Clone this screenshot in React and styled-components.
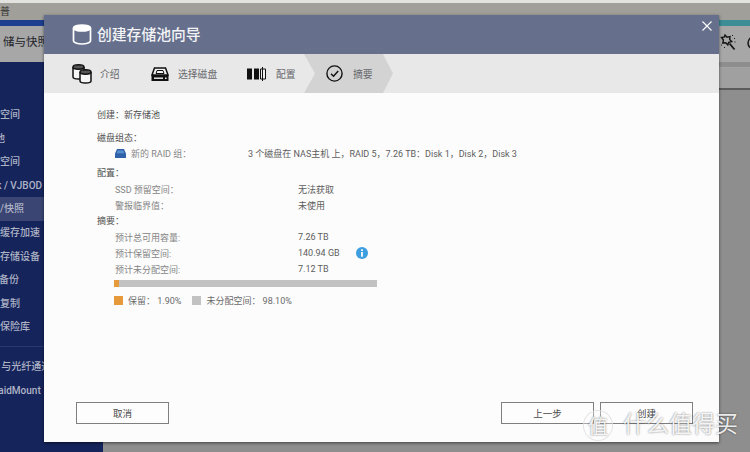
import React from 'react';
import styled, { createGlobalStyle } from 'styled-components';

const Global = createGlobalStyle`
  html, body { margin: 0; padding: 0; background: #8e8e8e; }
  * { box-sizing: border-box; }
`;

const FONT = `Roboto, "Noto Sans CJK SC", sans-serif`;

// Fenêtre de fond
const Page = styled.div`
  position: relative;
  width: 750px;
  height: 452px;
  overflow: hidden;
  display: flex;
  flex-direction: column;
  font-family: ${FONT};
  background: #8e8e8e;
`;

const TopStrip = styled.div`
  height: 3px;
  background: #e2e3df;
`;

const TitleBar = styled.div`
  height: 17px;
  background: #a09f9a;
  color: #33332f;
  font-size: 10px;
  line-height: 18px;
  overflow: hidden;
`;

const TitleText = styled.span`
  display: block;
  margin-left: 0;
`;

const Accent = styled.div`
  height: 6px;
  background: linear-gradient(90deg, #1d3f8f 0%, #1d3f8f 40%, #3c8d96 90%);
`;

const Toolbar = styled.div`
  height: 36px;
  background: #a7a7a7;
  display: flex;
  align-items: center;
  justify-content: space-between;
  overflow: hidden;
`;

const ToolbarTitle = styled.div`
  font-size: 11.5px;
  color: #22242a;
  margin-left: 3px;
  margin-top: -6px;
`;

const ToolIcons = styled.div`
  display: flex;
  align-items: center;
  gap: 11px;
  margin-right: -11px;
  margin-top: -3px;
`;

const Main = styled.div`
  flex: 1;
  display: flex;
  min-height: 0;
`;

const Sidebar = styled.div`
  width: 103px;
  background: #15245b;
  padding-top: 41px;
  overflow: hidden;
`;

const NavItem = styled.div`
  height: 23.6px;
  line-height: 23.6px;
  font-size: 10px;
  font-weight: 500;
  color: #aeb3c6;
  white-space: nowrap;
  background: ${p => (p.$active ? '#3a4573' : 'transparent')};
`;

const NavLabel = styled.span`
  display: inline-block;
  margin-left: ${p => p.$shift || 0}px;
`;

const NavGap = styled.div`
  height: 8px;
  margin-bottom: 8px;
  border-bottom: 1px solid #2a3870;
`;

const RightPane = styled.div`
  flex: 1;
  background: #8e8e8e;
`;

const PaneHead = styled.div`
  height: 23px;
  margin-top: 5px;
  border-top: 1px solid #a4a4a4;
  border-bottom: 2px solid #5b5b5b;
  background: #a0a0a0;
`;

// Diálogo
const Dialog = styled.div`
  position: absolute;
  left: 44px;
  top: 15px;
  width: 675px;
  height: 427px;
  background: #fcfcfc;
  box-shadow: 0 1px 3px rgba(0, 0, 0, 0.55);
  display: flex;
  flex-direction: column;
`;

const Header = styled.div`
  position: relative;
  height: 39px;
  flex: none;
  background: #666f8c;
  display: flex;
  align-items: center;
  gap: 5px;
  padding-left: 28px;
  color: #f3f4f7;
  font-size: 14.8px;
  font-weight: 500;
`;

const HeaderTitle = styled.div`
  margin-bottom: 3px;
`;

const Close = styled.div`
  position: absolute;
  right: 6px;
  top: 5px;
  width: 12px;
  height: 12px;
  display: flex;
`;

const Steps = styled.div`
  height: 39px;
  flex: none;
  background: #e8e8e8;
  display: flex;
  padding-left: 28px;
`;

const Step = styled.div`
  width: ${p => p.$width}px;
  display: flex;
  align-items: center;
  gap: ${p => p.$gap}px;
  font-size: 9.8px;
  color: #66676b;
  ${p =>
    p.$active &&
    `
    background: #d3d3d3;
    padding-left: 22px;
    clip-path: polygon(0 0, 79px 0, 89px 50%, 79px 100%, 0 100%, 11px 50%);
  `}
`;

const Body = styled.div`
  flex: 1;
  padding: 14px 26px 18px 53px;
  display: flex;
  flex-direction: column;
  font-size: 9px;
  color: #5a5a5a;
`;

const Heading = styled.div`
  height: 16px;
  line-height: 16px;
  margin-top: ${p => p.$top || 0}px;
  color: #4c4c4c;
`;

const Row = styled.div`
  display: flex;
  align-items: center;
  height: ${p => p.$height || 16}px;
  padding-left: 18px;
  color: #858585;
`;

const RowLabel = styled.div`
  width: ${p => p.$width}px;
  flex: none;
  display: flex;
  align-items: center;
  gap: 5px;
  color: inherit;
`;

const RowValue = styled.div`
  display: flex;
  align-items: center;
  color: #5d5d5d;
  white-space: nowrap;
`;

const InfoDot = styled.div`
  width: 12px;
  height: 12px;
  margin-left: 16px;
  display: flex;
`;

const Bar = styled.div`
  width: 263px;
  height: 7px;
  margin: 3px 0 0 17px;
  background: #c2c2c2;
  display: flex;
`;

const BarFill = styled.div`
  height: 100%;
  background: #e79a3c;
`;

const Legend = styled.div`
  display: flex;
  align-items: center;
  margin: 7px 0 0 17px;
  color: #6a6a6a;
`;

const Swatch = styled.span`
  width: 9px;
  height: 9px;
  background: ${p => p.$color};
  margin-right: 5px;
`;

const LegendText = styled.span`
  margin-right: 11px;
  white-space: nowrap;
`;

const Footer = styled.div`
  margin-top: auto;
  margin-left: -21px;
  display: flex;
  align-items: center;
`;

const Button = styled.button`
  width: 93px;
  height: 22px;
  padding: 0;
  margin-left: ${p => p.$left || 0}px;
  background: #fdfdfd;
  border: 1px solid #7f7f7f;
  border-radius: 0;
  font-family: ${FONT};
  font-size: 9.5px;
  color: #4a4a4a;
`;

const Spacer = styled.div`
  flex: 1;
`;

// Marca d'água
const Watermark = styled.div`
  position: absolute;
  left: 583px;
  top: 410px;
  display: flex;
  align-items: flex-start;
  color: rgba(255, 255, 255, 0.9);
  text-shadow: 0 0 2px rgba(0, 0, 0, 0.55);
`;

const Badge = styled.div`
  width: 30px;
  height: 31px;
  border-radius: 50%;
  border: 1.5px solid rgba(225, 225, 225, 0.85);
  background: rgba(255, 255, 255, 0.3);
  display: flex;
  align-items: center;
  justify-content: center;
  font-size: 20px;
`;

const MarkText = styled.div`
  margin-left: 10px;
  font-size: 23px;
  line-height: 30px;
  white-space: nowrap;
`;

const Cylinder = () => (
  <svg width="20" height="21" viewBox="0 0 20 21" fill="none" stroke="#fff" strokeWidth="1.7">
    <path d="M1.5 4v13c0 1.5 3.6 3 8.5 3s8.5-1.5 8.5-3V4" />
    <ellipse cx="10" cy="4" rx="8.5" ry="3" fill="#fff" />
  </svg>
);

const DbPair = () => (
  <svg width="20" height="20" viewBox="0 0 20 20" fill="#f6f6f6" stroke="#111" strokeWidth="1.5">
    <path d="M1 3v10c0 1 2.3 2 5.5 2s5.5-1 5.5-2V3" />
    <ellipse cx="6.5" cy="3" rx="5.5" ry="2.2" fill="#555" />
    <path d="M8 8v9c0 1 2.3 2 5.5 2s5.5-1 5.5-2V8" />
    <ellipse cx="13.5" cy="8" rx="5.5" ry="2.2" fill="#555" />
  </svg>
);

const DiskTray = () => (
  <svg width="18" height="14" viewBox="0 0 18 14" fill="none">
    <path d="M3.5 1h11l2.5 7H1z" stroke="#111" strokeWidth="1.5" fill="#f2f2f2" />
    <path d="M6 3.5h6l1 3H5z" stroke="#111" strokeWidth="1" />
    <path d="M.5 8h17v6H.5z" fill="#111" />
    <path d="M3 10.5h9v1.4H3z" fill="#f2f2f2" />
    <path d="M14 10.5h1.6v1.4H14z" fill="#f2f2f2" />
  </svg>
);

const RaidBars = () => (
  <svg width="19" height="14" viewBox="0 0 19 14">
    <path d="M0 1.5h5v11H0zM7 1.5h5v11H7z" fill="#111" />
    <path d="M13.5 2h5v10h-5z" fill="#f2f2f2" stroke="#111" />
    <path d="M15.5 0v14" stroke="#111" />
  </svg>
);

const CheckCircle = () => (
  <svg width="17" height="17" viewBox="0 0 17 17" fill="none" stroke="#111">
    <circle cx="8.5" cy="8.5" r="7.6" strokeWidth="1.4" />
    <path d="M5 8.8l2.5 2.4L12.2 6" strokeWidth="1.5" />
  </svg>
);

const HddBlue = () => (
  <svg width="11" height="9" viewBox="0 0 11 9">
    <path d="M2 0h7l2 4.5V9H0V4.5z" fill="#2f62a8" />
    <path d="M2.7 1.5h5.6l1 2.7H1.7z" fill="#5b90cf" />
  </svg>
);

const Wand = () => (
  <svg width="16" height="17" viewBox="0 0 16 17" fill="none" stroke="#151515">
    <path d="M5 1l2 2.2 3-.6-.3 3 2 2-3 .7-.9 2.7-2-2.2-3 .2.6-3L1.5 3.5l3-.5z" strokeWidth="1.4" />
    <path d="M9.5 9.5l5 6" strokeWidth="1.8" />
    <path d="M12 1.5h1M14 4.5h1M14.5 8h1M1 11h1M4 13.5h1" strokeDasharray="1 1" />
  </svg>
);

const Ring = () => (
  <svg width="14" height="16" viewBox="0 0 14 16" fill="none" stroke="#151515" strokeWidth="1.5">
    <circle cx="7" cy="8" r="6" />
  </svg>
);

const navItems = [
  { label: '存储空间', shift: -20 },
  { label: '池', shift: -5 },
  { label: '空间', shift: 0 },
  { label: 'Disk / VJBOD', shift: -18 },
  { label: '组/快照', shift: -10, active: true },
  { label: '缓存加速', shift: 0 },
  { label: '存储设备', shift: 0 },
  { label: '备份', shift: -1 },
  { label: '复制', shift: 0 },
  { label: '保险库', shift: 0 },
];

const App = () => {
  return (
    <Page>
      <Global />
      <TopStrip />
      <TitleBar>
        <TitleText>普</TitleText>
      </TitleBar>
      <Accent />
      <Toolbar>
        <ToolbarTitle>储与快照</ToolbarTitle>
        <ToolIcons>
          <Wand />
          <Ring />
        </ToolIcons>
      </Toolbar>
      <Main>
        <Sidebar>
          {navItems.map(item => (
            <NavItem key={item.label} $active={item.active}>
              <NavLabel $shift={item.shift}>{item.label}</NavLabel>
            </NavItem>
          ))}
          <NavGap />
          <NavItem>
            <NavLabel $shift={-4}>I 与光纤通道</NavLabel>
          </NavItem>
          <NavItem>
            <NavLabel $shift={-8}>RaidMount</NavLabel>
          </NavItem>
        </Sidebar>
        <RightPane>
          <PaneHead />
        </RightPane>
      </Main>

      <Dialog>
        <Header>
          <Cylinder />
          <HeaderTitle>创建存储池向导</HeaderTitle>
          <Close>
            <svg width="12" height="12" viewBox="0 0 12 12" stroke="#fff" strokeWidth="1.1">
              <path d="M1.5 1.5l9 9M10.5 1.5l-9 9" />
            </svg>
          </Close>
        </Header>
        <Steps>
          <Step $width={79} $gap={8}>
            <DbPair />
            介绍
          </Step>
          <Step $width={96} $gap={9}>
            <DiskTray />
            选择磁盘
          </Step>
          <Step $width={57} $gap={10}>
            <RaidBars />
            配置
          </Step>
          <Step $width={89} $gap={10} $active>
            <CheckCircle />
            摘要
          </Step>
        </Steps>
        <Body>
          <Heading>创建：新存储池</Heading>
          <Heading $top={7}>磁盘组态：</Heading>
          <Row $height={14}>
            <RowLabel $width={133}>
              <HddBlue />
              新的 RAID 组：
            </RowLabel>
            <RowValue>3 个磁盘在 NAS主机 上，RAID 5，7.26 TB：Disk 1，Disk 2，Disk 3</RowValue>
          </Row>
          <Heading $top={5}>配置：</Heading>
          <Row>
            <RowLabel $width={183}>SSD 预留空间：</RowLabel>
            <RowValue>无法获取</RowValue>
          </Row>
          <Row>
            <RowLabel $width={183}>警报临界值：</RowLabel>
            <RowValue>未使用</RowValue>
          </Row>
          <Heading>摘要：</Heading>
          <Row>
            <RowLabel $width={183}>预计总可用容量:</RowLabel>
            <RowValue>7.26 TB</RowValue>
          </Row>
          <Row>
            <RowLabel $width={183}>预计保留空间:</RowLabel>
            <RowValue>
              140.94 GB
              <InfoDot>
                <svg width="12" height="12" viewBox="0 0 12 12">
                  <circle cx="6" cy="6" r="6" fill="#3d9ee0" />
                  <path d="M5 2.3h2v1.6H5zM5 5h2v4.8H5z" fill="#e8f3fb" />
                </svg>
              </InfoDot>
            </RowValue>
          </Row>
          <Row>
            <RowLabel $width={183}>预计未分配空间:</RowLabel>
            <RowValue>7.12 TB</RowValue>
          </Row>
          <Bar>
            <BarFill style={{ width: `${263 * 0.019}px` }} />
          </Bar>
          <Legend>
            <Swatch $color="#e79a3c" />
            <LegendText>保留： 1.90%</LegendText>
            <Swatch $color="#c2c2c2" />
            <LegendText>未分配空间： 98.10%</LegendText>
          </Legend>
          <Footer>
            <Button>取消</Button>
            <Spacer />
            <Button>上一步</Button>
            <Button $left={6}>创建</Button>
          </Footer>
        </Body>
      </Dialog>

      <Watermark>
        <Badge>值</Badge>
        <MarkText>什么值得买</MarkText>
      </Watermark>
    </Page>
  );
};

export default App;
